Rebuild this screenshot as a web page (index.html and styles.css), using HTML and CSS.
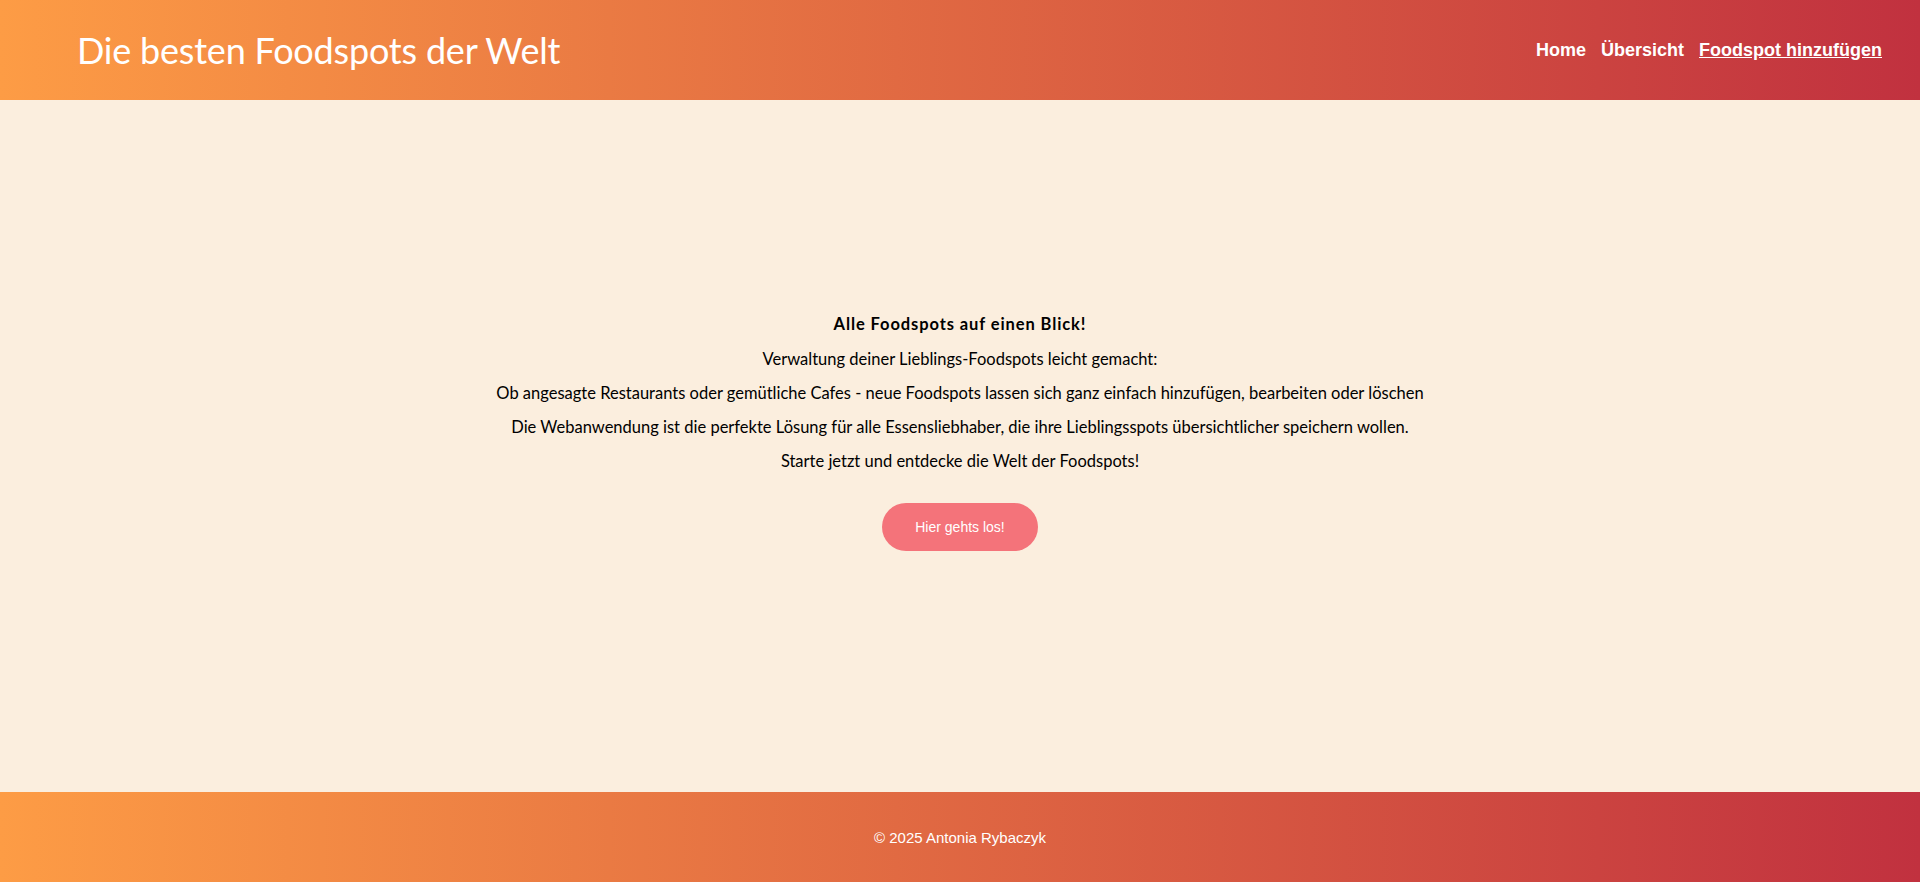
FILE: index.html
```html
<!DOCTYPE html>
<html lang="de">
<head>
<meta charset="utf-8">
<title>Die besten Foodspots der Welt</title>
<link rel="stylesheet" href="styles.css">
</head>
<body>
<header class="site-header">
  <h1 class="site-title">Die besten Foodspots der Welt</h1>
  <nav class="main-nav">
    <a class="nav-link" href="#">Home</a>
    <a class="nav-link" href="#">Übersicht</a>
    <a class="nav-link nav-link-active" href="#">Foodspot hinzufügen</a>
  </nav>
</header>
<main class="intro">
  <div class="intro-content">
    <p class="intro-text intro-lead">Alle Foodspots auf einen Blick!</p>
    <p class="intro-text">Verwaltung deiner Lieblings-Foodspots leicht gemacht:</p>
    <p class="intro-text">Ob angesagte Restaurants oder gemütliche Cafes - neue Foodspots lassen sich ganz einfach hinzufügen, bearbeiten oder löschen</p>
    <p class="intro-text">Die Webanwendung ist die perfekte Lösung für alle Essensliebhaber, die ihre Lieblingsspots übersichtlicher speichern wollen.</p>
    <p class="intro-text">Starte jetzt und entdecke die Welt der Foodspots!</p>
    <a class="start-button" href="#">Hier gehts los!</a>
  </div>
</main>
<footer class="site-footer">
  <p class="footer-text">© 2025 Antonia Rybaczyk</p>
</footer>
</body>
</html>
```

FILE: styles.css
```css
html, body {
  margin: 0;
  padding: 0;
}

body {
  background: #fbeede;
  font-family: "Lato", "Open Sans", sans-serif;
  color: #000;
  display: flex;
  flex-direction: column;
  min-height: 882px;
}

.site-header {
  height: 100px;
  box-sizing: border-box;
  display: flex;
  align-items: center;
  justify-content: space-between;
  padding: 0 38px 0 77px;
  background: linear-gradient(to right, #fd9c45, #c1313f);
}

.site-title {
  margin: 0;
  font-family: "Lato", sans-serif;
  font-weight: 400;
  font-size: 36px;
  color: #fff;
  letter-spacing: -0.2px;
}

.main-nav {
  display: flex;
  gap: 15px;
}

.nav-link {
  font-family: "Liberation Sans", Arial, sans-serif;
  font-weight: 700;
  font-size: 18px;
  color: #fff;
  text-decoration: none;
}

.nav-link-active {
  text-decoration: underline;
}

.intro {
  height: 692px;
  box-sizing: border-box;
  display: flex;
  flex-direction: column;
  align-items: center;
  justify-content: center;
  padding-bottom: 26px;
}

.intro-content {
  display: flex;
  flex-direction: column;
  align-items: center;
  gap: 16px;
  text-align: center;
}

.intro-text {
  margin: 0;
  font-size: 16.5px;
  line-height: 18.3px;
}

.intro-lead {
  font-weight: 700;
  letter-spacing: 0.9px;
}

.start-button {
  margin-top: 16px;
  display: inline-block;
  padding: 16px 33px;
  border-radius: 24px;
  background: #f4737a;
  color: #fff;
  font-family: "Liberation Sans", Arial, sans-serif;
  font-size: 14px;
  line-height: 16px;
  text-decoration: none;
}

.site-footer {
  height: 90px;
  display: flex;
  align-items: center;
  justify-content: center;
  background: linear-gradient(to right, #fd9c45, #c1313f);
}

.footer-text {
  margin: 0;
  font-family: "Liberation Sans", Arial, sans-serif;
  font-size: 15px;
  color: #fff;
}
```
